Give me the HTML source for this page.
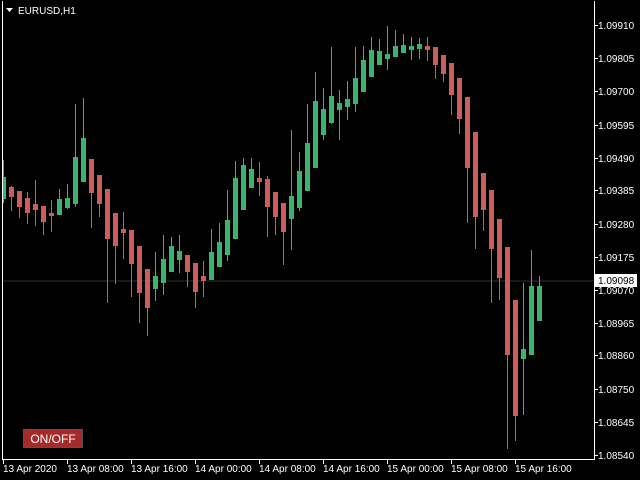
<!DOCTYPE html>
<html><head><meta charset="utf-8"><style>
html,body{margin:0;padding:0;background:#000;width:640px;height:480px;overflow:hidden}
svg{display:block}
text{font-family:"Liberation Sans",sans-serif;font-size:10px;fill:#fff}
</style></head><body>
<svg id="s" width="640" height="480" xmlns="http://www.w3.org/2000/svg">
<rect x="0" y="0" width="640" height="480" fill="#000"/>
<line x1="2" y1="281" x2="594" y2="281" stroke="#2c2e33" stroke-width="1"/>
<g id="c"></g>
<rect x="2" y="1" width="1" height="459" fill="#fff"/>
<rect x="594" y="1" width="1" height="459" fill="#fff"/>
<rect x="2" y="459" width="593" height="1" fill="#fff"/>
<polygon points="6,8 13,8 9.5,12" fill="#fff"/>
<text x="18" y="14">EURUSD,H1</text>
<g id="ya"></g>
<rect x="595" y="274" width="42" height="13" fill="#fff"/>
<text x="598" y="284" style="fill:#000">1.09098</text>
<g id="xa"></g>
<rect x="23.5" y="429.5" width="59" height="18" fill="#a52a2a" stroke="#555" stroke-width="1"/>
<text x="53" y="443" text-anchor="middle" style="font-size:12px">ON/OFF</text>
</svg>
<script>
var C=[
['g',177,198,160,202],['r',187,196,186,210],['r',191,206,191,217],['r',198,212,192,223],['r',204,209,180,225],
['r',206,221,206,234],['r',213,215,200,231],['g',199,214,189,214],['g',198,207,184,208],['g',157,203,104,206],
['g',138,181,98,181],['r',159,192,159,227],['r',175,203,175,216],['r',189,238,189,302],['r',213,245,213,283],
['r',229,232,212,258],['r',230,263,230,296],['r',246,292,246,322],['r',269,307,269,335],['g',276,288,252,300],
['g',259,282,235,294],['g',246,271,237,271],['g',251,259,235,272],['r',255,271,255,286],['r',263,291,263,307],
['r',276,280,261,296],['g',252,279,229,279],['g',242,266,223,266],['g',220,254,190,260],['g',178,238,161,238],
['g',165,209,158,209],['g',169,187,158,187],['r',178,181,162,195],['r',179,206,176,236],['r',192,216,192,234],
['r',203,231,203,264],['g',196,218,130,249],['g',171,207,152,210],['g',143,190,104,190],['g',101,167,72,167],
['g',109,134,88,139],['g',96,122,47,123],['g',103,109,90,139],['g',99,106,81,119],['g',78,103,47,111],
['g',60,91,46,91],['g',50,76,37,76],['g',51,64,39,64],['g',54,58,26,69],['g',46,56,30,56],
['g',45,52,34,52],['g',46,49,37,59],['g',44,48,38,58],['r',46,49,37,60],['r',47,64,47,78],
['r',55,73,55,81],['r',63,94,63,114],['r',78,118,78,133],['r',97,167,97,222],['r',132,216,132,248],
['r',173,209,173,230],['r',190,248,190,302],['r',219,277,219,299],['r',247,354,247,448],['r',300,415,300,440],
['g',349,358,283,414],['g',286,354,250,354],['g',286,320,276,320]];
var h='';
C.forEach(function(c,k){var col=c[0]=='g'?'#3cb371':'#cd5c5c';var bx=1+8*k,wx=3+8*k;
if(bx<3){bx=3;}
h+='<rect x="'+wx+'" y="'+c[3]+'" width="1" height="'+(c[4]-c[3]+1)+'" fill="'+col+'"/>';
h+='<rect x="'+bx+'" y="'+c[1]+'" width="'+(1+8*k+5-bx)+'" height="'+Math.max(2,c[2]-c[1]+1)+'" fill="'+col+'"/>';});
document.getElementById('c').innerHTML=h;
var Y=[['1.09910',25],['1.09805',58],['1.09700',91],['1.09595',125],['1.09490',158],['1.09385',190],['1.09280',224],['1.09175',257],['1.09070',290],['1.08965',323],['1.08860',355],['1.08750',389],['1.08645',422],['1.08540',455]];
var y='';Y.forEach(function(a){y+='<rect x="595" y="'+a[1]+'" width="3" height="1" fill="#fff"/><text x="598" y="'+(a[1]+4)+'">'+a[0]+'</text>';});
document.getElementById('ya').innerHTML=y;
var X=['13 Apr 2020','13 Apr 08:00','13 Apr 16:00','14 Apr 00:00','14 Apr 08:00','14 Apr 16:00','15 Apr 00:00','15 Apr 08:00','15 Apr 16:00'];
var xs=[3,67,131,195,259,323,387,451,515],x='';
X.forEach(function(t,i){x+='<rect x="'+xs[i]+'" y="460" width="1" height="4" fill="#fff"/><text x="'+(xs[i]+0)+'" y="472">'+t+'</text>';});
document.getElementById('xa').innerHTML=x;
</script>
</body></html>
